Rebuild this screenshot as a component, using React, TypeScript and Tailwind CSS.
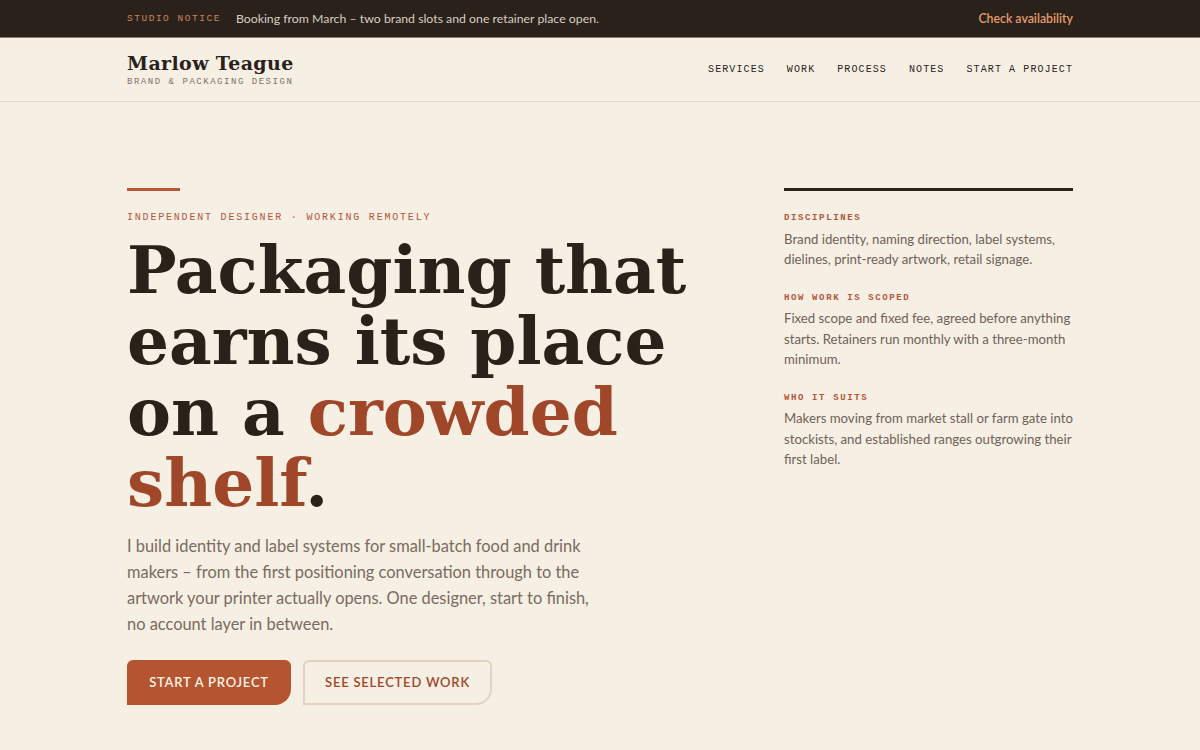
import React from "react";

const serif = "font-['DejaVu_Serif',serif]";
const mono = "font-['Liberation_Mono',monospace]";
const sans = "font-['Lato','Noto_Sans',sans-serif]";

function Label({ children }: { children: React.ReactNode }) {
  return (
    <div className={`${mono} text-[9px] font-bold uppercase tracking-[0.18em] text-[#b5553a]`}>
      {children}
    </div>
  );
}

export default function App() {
  return (
    <div className={`min-h-[750px] bg-[#f6efe4] ${sans}`}>
      <div className="h-[38px] bg-[#2a211b] border-b border-[#8a7b6c]">
        <div className="mx-auto flex h-full max-w-[946px] items-center justify-between pt-[1px]">
          <div className="flex items-center gap-[15px]">
            <span className={`${mono} text-[9.5px] tracking-[0.16em] text-[#c9855a]`}>STUDIO NOTICE</span>
            <span className="text-[12.3px] text-[#d8cec2]">
              Booking from March – two brand slots and one retainer place open.
            </span>
          </div>
          <span className="text-[12.3px] font-semibold text-[#e19c6c]">Check availability</span>
        </div>
      </div>

      <header className="h-[64px] border-b border-[#e2d8ca]">
        <div className="mx-auto flex h-full max-w-[946px] items-center justify-between">
          <div className="pt-[2px]">
            <div className={`${serif} text-[19px] font-bold leading-[22px] tracking-[0.02em] text-[#2a211b]`}>
              Marlow Teague
            </div>
            <div className={`${mono} mt-[2px] text-[9px] tracking-[0.17em] text-[#7d7168]`}>
              BRAND &amp; PACKAGING DESIGN
            </div>
          </div>
          <nav className={`${mono} flex items-center gap-[22px] text-[10px] tracking-[0.11em] text-[#2a211b]`}>
            <span>SERVICES</span>
            <span>WORK</span>
            <span>PROCESS</span>
            <span>NOTES</span>
            <span>START A PROJECT</span>
          </nav>
        </div>
      </header>

      <main className="mx-auto grid max-w-[946px] grid-cols-[1fr_289px] gap-x-[40px] pt-[86px]">
        <section>
          <div className="h-[3px] w-[53px] bg-[#b9573a]" />
          <div className={`${mono} mt-[19px] text-[10px] tracking-[0.18em] text-[#b5553a]`}>
            INDEPENDENT DESIGNER · WORKING REMOTELY
          </div>
          <h1 className={`${serif} mt-[10px] text-[66px] font-bold leading-[71px] text-[#2a211b]`}>
            Packaging that
            <br />
            earns its place
            <br />
            on a <span className="text-[#a0472a]">crowded</span>
            <br />
            <span className="text-[#a0472a]">shelf</span>.
          </h1>
          <p className="mt-[14px] max-w-[470px] text-[16.4px] leading-[26px] text-[#7a6b60]">
            I build identity and label systems for small-batch food and drink makers – from the first
            positioning conversation through to the artwork your printer actually opens. One designer,
            start to finish, no account layer in between.
          </p>
          <div className="mt-[23px] flex gap-[12px]">
            <button className="h-[45px] w-[164px] rounded-tl-md rounded-tr-md rounded-br-2xl rounded-bl-none bg-[#b5552f] text-[13px] font-semibold tracking-[0.06em] text-[#fbf3ea]">
              START A PROJECT
            </button>
            <button className="h-[45px] w-[189px] rounded-tl-md rounded-tr-md rounded-br-2xl rounded-bl-none border-2 border-[#e2d3bd] text-[13px] font-semibold tracking-[0.06em] text-[#a0472a]">
              SEE SELECTED WORK
            </button>
          </div>
        </section>

        <aside>
          <div className="h-[3px] w-full bg-[#2a211b]" />
          <div className="mt-[21px]">
            <Label>Disciplines</Label>
            <p className="mt-[3px] text-[13.2px] leading-[20.5px] text-[#6f6258]">
              Brand identity, naming direction, label systems, dielines, print-ready artwork, retail signage.
            </p>
          </div>
          <div className="mt-[22px]">
            <Label>How work is scoped</Label>
            <p className="mt-[3px] text-[13.2px] leading-[20.5px] text-[#6f6258]">
              Fixed scope and fixed fee, agreed before anything starts. Retainers run monthly with a
              three-month minimum.
            </p>
          </div>
          <div className="mt-[22px]">
            <Label>Who it suits</Label>
            <p className="mt-[3px] text-[13.2px] leading-[20.5px] text-[#6f6258]">
              Makers moving from market stall or farm gate into stockists, and established ranges outgrowing
              their first label.
            </p>
          </div>
        </aside>
      </main>
    </div>
  );
}
